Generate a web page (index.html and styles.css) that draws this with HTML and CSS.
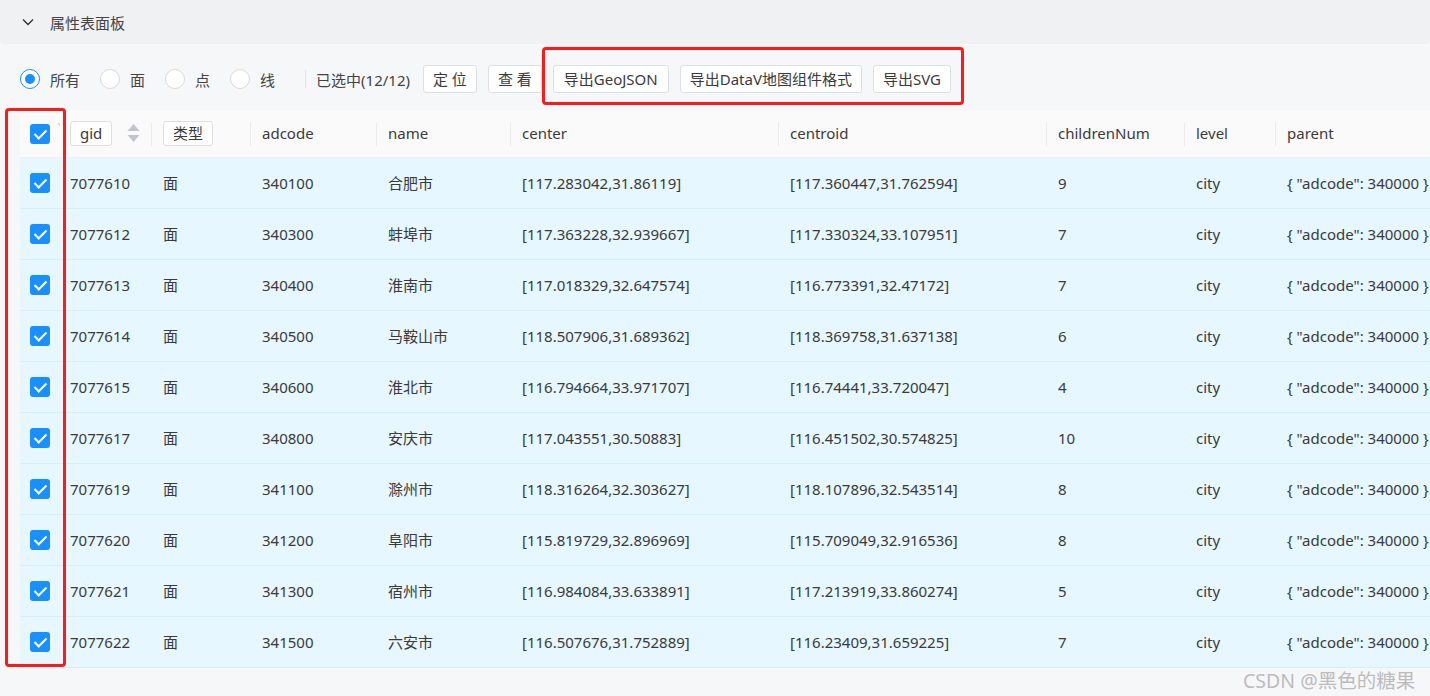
FILE: index.html
```html
<!DOCTYPE html>
<html lang="zh">
<head>
<meta charset="utf-8">
<title>属性表面板</title>
<link rel="stylesheet" href="styles.css">
</head>
<body>
<div class="page">
  <div class="panel-header">
    <svg class="chev" width="12" height="8" viewBox="0 0 12 8"><path d="M1 1.5 L6 6.5 L11 1.5" fill="none" stroke="#333" stroke-width="1.4"/></svg>
    <span class="panel-title">属性表面板</span>
  </div>
  <div class="toolbar">
    <label class="radio"><span class="radio-dot checked"></span><span>所有</span></label>
    <label class="radio"><span class="radio-dot"></span><span>面</span></label>
    <label class="radio"><span class="radio-dot"></span><span>点</span></label>
    <label class="radio"><span class="radio-dot"></span><span>线</span></label>
    <span class="vsep"></span>
    <span class="sel-info">已选中(12/12)</span>
    <button class="btn">定 位</button>
    <button class="btn">查 看</button>
    <button class="btn btn-wide">导出GeoJSON</button>
    <button class="btn">导出DataV地图组件格式</button>
    <button class="btn">导出SVG</button>
  </div>
  <div class="table-wrap">
    <table class="grid">
      <colgroup>
        <col class="c-chk"><col class="c-gid"><col class="c-type"><col class="c-adcode"><col class="c-name"><col class="c-center"><col class="c-centroid"><col class="c-child"><col class="c-level"><col class="c-parent">
      </colgroup>
      <thead>
        <tr>
          <th class="chk-cell"><span class="cb"></span><svg class="mini-chev" width="10" height="7" viewBox="0 0 10 7"><path d="M1 1 L5 6 L9 1" fill="none" stroke="#c8c8c8" stroke-width="1.2"/></svg></th>
          <th class="sep"><span class="tag">gid</span><svg class="sorter" width="13" height="20" viewBox="0 0 13 20"><path d="M6.5 1 L12.5 8 L0.5 8 Z" fill="#c0c4cc"/><path d="M6.5 19 L12.5 12 L0.5 12 Z" fill="#c0c4cc"/></svg></th>
          <th class="sep"><span class="tag">类型</span></th>
          <th class="sep">adcode</th>
          <th class="sep">name</th>
          <th class="sep">center</th>
          <th class="sep">centroid</th>
          <th class="sep">childrenNum</th>
          <th class="sep">level</th>
          <th>parent</th>
        </tr>
      </thead>
      <tbody>
        <tr><td class="chk-cell"><span class="cb"></span></td><td>7077610</td><td>面</td><td>340100</td><td>合肥市</td><td>[117.283042,31.86119]</td><td>[117.360447,31.762594]</td><td>9</td><td>city</td><td>{ "adcode": 340000 }</td></tr>
        <tr><td class="chk-cell"><span class="cb"></span></td><td>7077612</td><td>面</td><td>340300</td><td>蚌埠市</td><td>[117.363228,32.939667]</td><td>[117.330324,33.107951]</td><td>7</td><td>city</td><td>{ "adcode": 340000 }</td></tr>
        <tr><td class="chk-cell"><span class="cb"></span></td><td>7077613</td><td>面</td><td>340400</td><td>淮南市</td><td>[117.018329,32.647574]</td><td>[116.773391,32.47172]</td><td>7</td><td>city</td><td>{ "adcode": 340000 }</td></tr>
        <tr><td class="chk-cell"><span class="cb"></span></td><td>7077614</td><td>面</td><td>340500</td><td>马鞍山市</td><td>[118.507906,31.689362]</td><td>[118.369758,31.637138]</td><td>6</td><td>city</td><td>{ "adcode": 340000 }</td></tr>
        <tr><td class="chk-cell"><span class="cb"></span></td><td>7077615</td><td>面</td><td>340600</td><td>淮北市</td><td>[116.794664,33.971707]</td><td>[116.74441,33.720047]</td><td>4</td><td>city</td><td>{ "adcode": 340000 }</td></tr>
        <tr><td class="chk-cell"><span class="cb"></span></td><td>7077617</td><td>面</td><td>340800</td><td>安庆市</td><td>[117.043551,30.50883]</td><td>[116.451502,30.574825]</td><td>10</td><td>city</td><td>{ "adcode": 340000 }</td></tr>
        <tr><td class="chk-cell"><span class="cb"></span></td><td>7077619</td><td>面</td><td>341100</td><td>滁州市</td><td>[118.316264,32.303627]</td><td>[118.107896,32.543514]</td><td>8</td><td>city</td><td>{ "adcode": 340000 }</td></tr>
        <tr><td class="chk-cell"><span class="cb"></span></td><td>7077620</td><td>面</td><td>341200</td><td>阜阳市</td><td>[115.819729,32.896969]</td><td>[115.709049,32.916536]</td><td>8</td><td>city</td><td>{ "adcode": 340000 }</td></tr>
        <tr><td class="chk-cell"><span class="cb"></span></td><td>7077621</td><td>面</td><td>341300</td><td>宿州市</td><td>[116.984084,33.633891]</td><td>[117.213919,33.860274]</td><td>5</td><td>city</td><td>{ "adcode": 340000 }</td></tr>
        <tr><td class="chk-cell"><span class="cb"></span></td><td>7077622</td><td>面</td><td>341500</td><td>六安市</td><td>[116.507676,31.752889]</td><td>[116.23409,31.659225]</td><td>7</td><td>city</td><td>{ "adcode": 340000 }</td></tr>
      </tbody>
    </table>
  </div>
  <div class="mark mark-buttons"></div>
  <div class="mark mark-checks"></div>
  <div class="watermark">CSDN @黑色的糖果</div>
</div>
</body>
</html>
```
FILE: styles.css
```css
* { box-sizing: border-box; }
html, body { margin: 0; padding: 0; }
body {
  background: #f6f7f9;
  font-family: "Noto Sans", "Noto Sans CJK SC", sans-serif;
  font-size: 15px;
  color: #3a3a3a;
  width: 1430px;
  height: 696px;
  overflow: hidden;
}
.page { position: relative; width: 1430px; height: 696px; }

.panel-header {
  height: 44px;
  background: #f0f1f3;
  border-radius: 0 0 4px 4px;
  display: flex;
  align-items: center;
  padding-left: 22px;
}
.chev { margin-right: 16px; }
.panel-title { color: #444; }

.toolbar {
  height: 66px;
  display: flex;
  align-items: center;
  padding-left: 20px;
  padding-top: 4px;
}
.radio { display: flex; align-items: center; margin-right: 20px; color: #444; }
.radio-dot {
  width: 20px; height: 20px;
  border-radius: 50%;
  border: 1px solid #d9d9d9;
  background: #fff;
  margin-right: 10px;
  position: relative;
}
.radio-dot.checked { border-color: #1890ff; }
.radio-dot.checked::after {
  content: "";
  position: absolute;
  left: 4px; top: 4px;
  width: 10px; height: 10px;
  border-radius: 50%;
  background: #1890ff;
}
.vsep { width: 1px; height: 18px; background: #e4e4e4; margin: 0 10px 0 10px; }
.sel-info { color: #444; margin-right: 13px; }
.btn {
  height: 28px;
  padding: 0 9px;
  margin-right: 11px;
  background: #fff;
  border: 1px solid #dcdfe6;
  border-radius: 3px;
  font-family: inherit;
  font-size: 15px;
  color: #3a3a3a;
  line-height: 26px;
}
.btn-wide { padding: 0 10px; }

.table-wrap {
  margin-left: 20px;
  width: 1410px;
  overflow: hidden;
}
.grid {
  border-collapse: collapse;
  table-layout: fixed;
  width: 1460px;
}
.c-chk { width: 40px; }
.c-gid { width: 92px; }
.c-type { width: 99px; }
.c-adcode { width: 126px; }
.c-name { width: 134px; }
.c-center { width: 268px; }
.c-centroid { width: 268px; }
.c-child { width: 138px; }
.c-level { width: 91px; }
.c-parent { width: 204px; }

.grid th {
  height: 47px;
  background: #fafafa;
  font-weight: normal;
  text-align: left;
  padding: 0 0 0 11px;
  color: #3a3a3a;
  white-space: nowrap;
  position: relative;
  border-bottom: 1px solid #f0f0f0;
}
.grid th.sep::after {
  content: "";
  position: absolute;
  right: 0; top: 12px;
  width: 1px; height: 24px;
  background: #ebebeb;
}
.grid th:nth-child(2) { padding-left: 10px; }
.grid td {
  height: 51px;
  background: #e6f7ff;
  border-bottom: 1px solid #d8eef9;
  padding: 0 0 0 11px;
  white-space: nowrap;
  overflow: hidden;
}
.grid td:nth-child(2) { padding-left: 10px; }
.grid .chk-cell { padding-left: 10px; position: relative; }
.cb {
  display: inline-block;
  vertical-align: middle;
  width: 20px; height: 20px;
  border-radius: 3px;
  background: #1890ff;
  position: relative;
}
.cb::after {
  content: "";
  position: absolute;
  left: 7px; top: 3px;
  width: 5px; height: 10px;
  border: solid #fff;
  border-width: 0 2px 2px 0;
  transform: rotate(45deg);
}
.mini-chev { position: absolute; left: 37px; top: 12px; }
.tag {
  display: inline-block;
  vertical-align: middle;
  height: 25px;
  line-height: 23px;
  padding: 0 9px;
  border: 1px solid #dcdfe6;
  border-radius: 3px;
  background: #fff;
}
.sorter { vertical-align: middle; margin-left: 15px; }

.mark {
  position: absolute;
  border: 3px solid #ff1a1a;
  border-radius: 4px;
  pointer-events: none;
}
.mark-buttons { left: 542px; top: 47px; width: 422px; height: 58px; }
.mark-checks { left: 5px; top: 108px; width: 61px; height: 559px; }

.watermark {
  position: absolute;
  left: 1243px;
  top: 665px;
  font-size: 19.5px;
  color: #bcbcbc;
}
```
